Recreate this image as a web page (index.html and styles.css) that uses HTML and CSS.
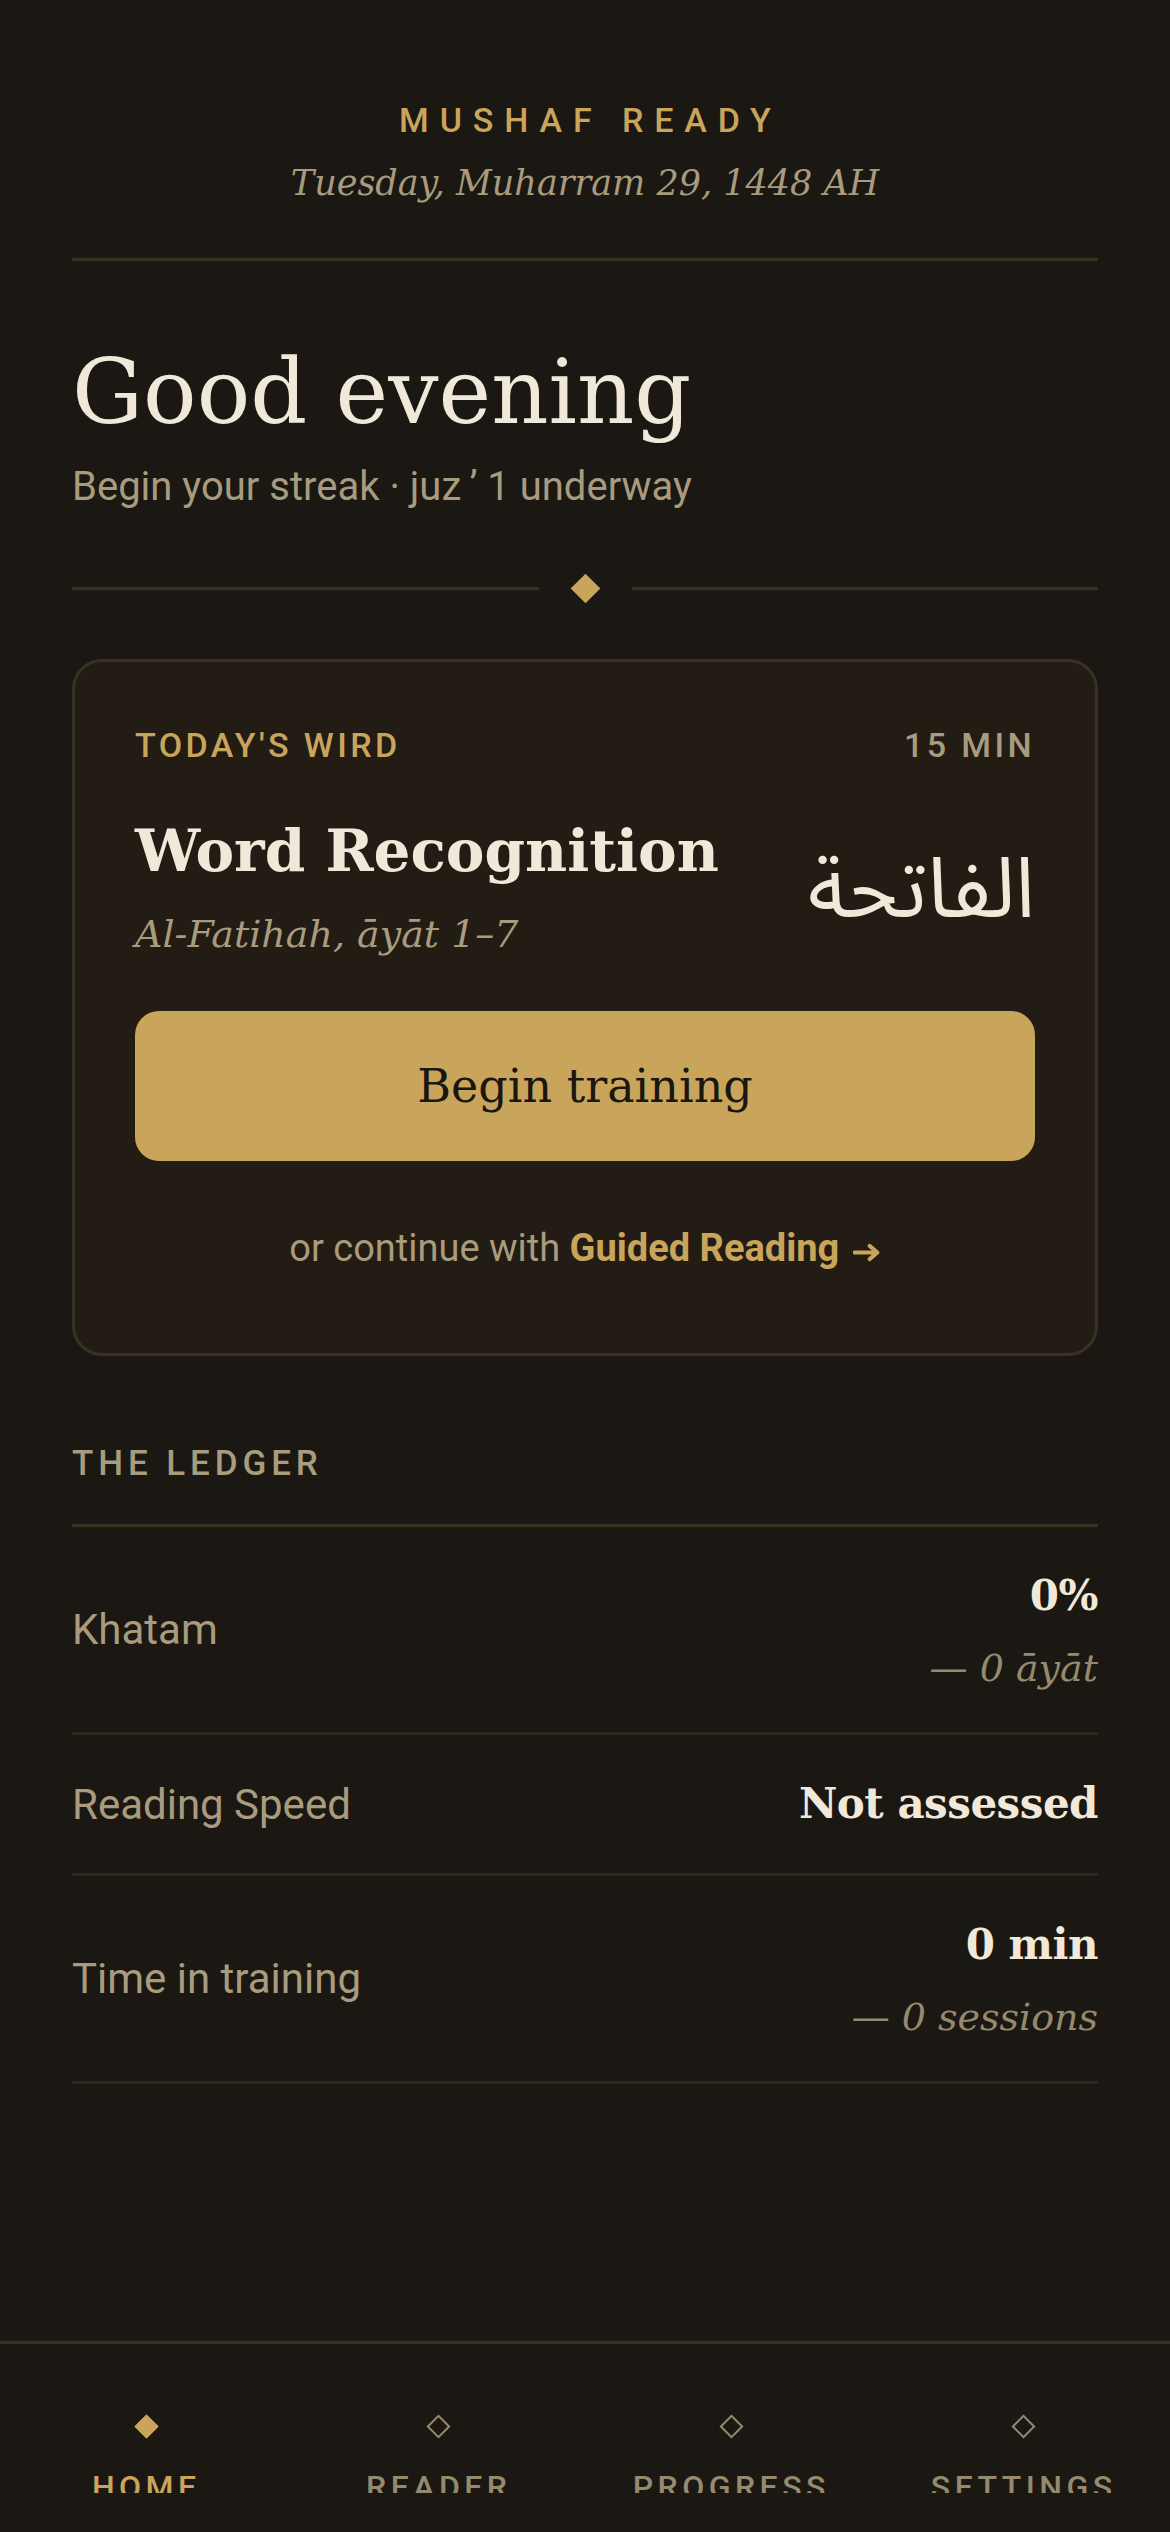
FILE: index.html
```html
<!DOCTYPE html>
<html lang="en">
<head>
    <meta charset="UTF-8">
    <meta name="viewport" content="width=device-width, initial-scale=1.0">
    <title>Mushaf Ready</title>
    <link rel="stylesheet" href="styles.css">
</head>
<body>
    <main class="page">
        <header class="masthead">
            <p class="masthead-eyebrow">Mushaf Ready</p>
            <p class="masthead-date">Tuesday, Muharram 29, 1448 AH</p>
        </header>

        <section class="greeting">
            <h1>Good evening</h1>
            <p>Begin your streak · juz&thinsp;ʼ 1 underway</p>
        </section>

        <div class="ornament">
            <span class="ornament-line"></span>
            <span class="ornament-diamond"></span>
            <span class="ornament-line"></span>
        </div>

        <section class="wird-card">
            <div class="wird-head">
                <span class="wird-label">Today's Wird</span>
                <span class="wird-time">15 min</span>
            </div>
            <div class="wird-body">
                <div>
                    <h2 class="wird-title">Word Recognition</h2>
                    <p class="wird-sub">Al-Fatihah, āyāt 1–7</p>
                </div>
                <span class="wird-arabic" lang="ar" dir="rtl">الفاتحة</span>
            </div>
            <button class="wird-button">Begin training</button>
            <p class="wird-alt">or continue with <a href="#">Guided Reading <svg class="arrow" viewBox="0 0 30 20" width="30" height="20"><path d="M2 10H26M18 3l8 7-8 7" fill="none" stroke="currentColor" stroke-width="4.5" stroke-linecap="round" stroke-linejoin="round"/></svg></a></p>
        </section>

        <section class="ledger">
            <h3 class="ledger-title">The Ledger</h3>
            <div class="ledger-row">
                <span class="ledger-name">Khatam</span>
                <div class="ledger-value">
                    <strong>0%</strong>
                    <em>— 0 āyāt</em>
                </div>
            </div>
            <div class="ledger-row">
                <span class="ledger-name">Reading Speed</span>
                <div class="ledger-value">
                    <strong>Not assessed</strong>
                </div>
            </div>
            <div class="ledger-row">
                <span class="ledger-name">Time in training</span>
                <div class="ledger-value">
                    <strong>0 min</strong>
                    <em>— 0 sessions</em>
                </div>
            </div>
        </section>
    </main>

    <nav class="tabbar">
        <a href="#" class="tab active"><span class="tab-icon"></span>Home</a>
        <a href="#" class="tab"><span class="tab-icon"></span>Reader</a>
        <a href="#" class="tab"><span class="tab-icon"></span>Progress</a>
        <a href="#" class="tab"><span class="tab-icon"></span>Settings</a>
    </nav>
</body>
</html>
```

FILE: styles.css
```css
body {
    margin: 0;
    min-height: 100vh;
    display: flex;
    flex-direction: column;
    background-color: #1b1813;
    color: #f0e8d8;
    font-family: Roboto, sans-serif;
}

p, h1, h2, h3 {
    margin: 0;
}

.page {
    flex: 1;
    padding: 0 72px;
}

/* header */
.masthead {
    text-align: center;
    padding: 100px 0 52px;
    border-bottom: 3px solid #39321f;
}

.masthead-eyebrow {
    font-size: 34px;
    line-height: 40px;
    font-weight: 500;
    letter-spacing: 0.32em;
    text-transform: uppercase;
    color: #c9a55c;
    margin-right: -0.32em;
}

.masthead-date {
    margin-top: 20px;
    font-family: "DejaVu Serif", serif;
    font-style: italic;
    font-size: 35px;
    line-height: 46px;
    color: #a99b7d;
}

/* greeting */
.greeting {
    padding-top: 82px;
}

.greeting h1 {
    font-family: "DejaVu Serif", serif;
    font-weight: normal;
    font-size: 89px;
    line-height: 98px;
    color: #f0e8d8;
}

.greeting p {
    margin-top: 22px;
    font-size: 40px;
    line-height: 48px;
    color: #a99b7d;
}

.ornament {
    display: flex;
    align-items: center;
    gap: 36px;
    margin: 67px 0 60px;
}

.ornament-line {
    flex: 1;
    height: 3px;
    background-color: #39321f;
}

.ornament-diamond {
    width: 21px;
    height: 21px;
    background-color: #c9a55c;
    transform: rotate(45deg);
}

/* today's wird */
.wird-card {
    background-color: #231c14;
    border: 3px solid #39321f;
    border-radius: 30px;
    padding: 63px 60px 82px;
}

.wird-head {
    display: flex;
    justify-content: space-between;
    font-size: 34px;
    line-height: 40px;
    font-weight: 500;
    letter-spacing: 0.1em;
    text-transform: uppercase;
}

.wird-label {
    color: #c9a55c;
}

.wird-time {
    color: #a99b7d;
}

.wird-body {
    display: flex;
    justify-content: space-between;
    align-items: flex-end;
    margin-top: 48px;
}

.wird-title {
    font-family: "DejaVu Serif", serif;
    font-weight: 600;
    font-size: 58px;
    line-height: 76px;
    color: #f0e8d8;
}

.wird-sub {
    margin-top: 22px;
    font-family: "DejaVu Serif", serif;
    font-style: italic;
    font-size: 38px;
    line-height: 46px;
    color: #a99b7d;
}

.wird-arabic {
    font-family: "Noto Sans Arabic", "Noto Naskh Arabic", "DejaVu Sans", sans-serif;
    font-size: 84px;
    line-height: 100px;
    color: #f0e8d8;
    margin-bottom: 16px;
}

.wird-button {
    display: block;
    width: 100%;
    height: 150px;
    margin-top: 54px;
    border: none;
    border-radius: 24px;
    background-color: #c9a55c;
    color: #1b1610;
    font-family: "DejaVu Serif", serif;
    font-size: 46px;
    cursor: pointer;
}

.wird-alt {
    margin-top: 64px;
    text-align: center;
    font-size: 38px;
    line-height: 46px;
    color: #a99b7d;
}

.wird-alt a {
    color: #c9a55c;
    font-weight: 700;
    text-decoration: none;
}

.arrow {
    width: 28px;
    height: 19px;
    margin-left: 4px;
    vertical-align: -1px;
}

/* ledger */
.ledger {
    padding-top: 88px;
}

.ledger-title {
    font-size: 35px;
    line-height: 40px;
    font-weight: 500;
    letter-spacing: 0.14em;
    text-transform: uppercase;
    color: #a99b7d;
    padding-bottom: 40px;
    border-bottom: 3px solid #39321f;
}

.ledger-row {
    display: flex;
    justify-content: space-between;
    align-items: center;
    padding: 40px 0;
    border-bottom: 3px solid #2e281c;
}

.ledger-name {
    font-size: 42px;
    color: #a99b7d;
}

.ledger-value {
    display: flex;
    flex-direction: column;
    align-items: flex-end;
}

.ledger-value strong {
    font-family: "DejaVu Serif", serif;
    font-weight: 600;
    font-size: 42px;
    line-height: 58px;
    letter-spacing: -0.5px;
    color: #f0e8d8;
}

.ledger-value em {
    margin-top: 19px;
    font-family: "DejaVu Serif", serif;
    font-size: 38px;
    line-height: 48px;
    color: #968a6e;
}

/* bottom tabs */
.tabbar {
    display: grid;
    grid-template-columns: repeat(4, 1fr);
    height: 149px;
    overflow: hidden;
    margin-bottom: 39px;
    border-top: 3px solid #39321f;
}

.tab {
    display: flex;
    flex-direction: column;
    align-items: center;
    padding-top: 74px;
    font-size: 32px;
    line-height: 40px;
    font-weight: 500;
    letter-spacing: 0.14em;
    text-transform: uppercase;
    color: #968a6e;
    text-decoration: none;
}

.tab-icon {
    width: 13px;
    height: 13px;
    border: 2px solid #968a6e;
    transform: rotate(45deg);
    margin-bottom: 32px;
}

.tab.active {
    color: #c9a55c;
}

.tab.active .tab-icon {
    background-color: #c9a55c;
    border-color: #c9a55c;
}
```
